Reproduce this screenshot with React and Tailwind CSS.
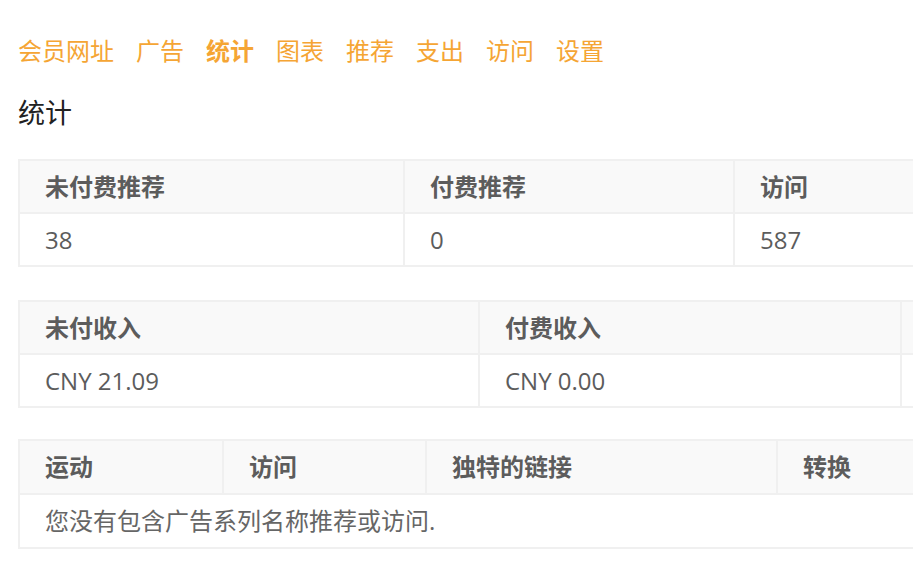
import React from 'react';

const navItems = ['会员网址', '广告', '统计', '图表', '推荐', '支出', '访问', '设置'];

const font = { fontFamily: '"Open Sans", "Noto Sans CJK SC", sans-serif' };

const StatTable = ({ cols, rows, full, tall }) => {
  const h = tall ? 'h-[54px]' : 'h-[53px]';
  return (
    <div className="overflow-hidden">
      <table className="border-collapse table-fixed" style={{ width: cols.reduce((s, c) => s + c.w, 0) }}>
        <colgroup>
          {cols.map((c, i) => (
            <col key={i} style={{ width: c.w }} />
          ))}
        </colgroup>
        <thead>
          <tr className="bg-[#f9f9f9]">
            {cols.map((c, i) => (
              <th key={i} className={h + ' border-2 border-[#f0f0f0] px-[25px] text-left font-bold text-[#5c5c5c] text-[24px]'}>
                {c.label}
              </th>
            ))}
          </tr>
        </thead>
        <tbody>
          {full ? (
            <tr>
              <td colSpan={cols.length} className={h + ' border-2 border-[#f0f0f0] px-[25px] text-[#666] text-[24px]'}>
                {full}
              </td>
            </tr>
          ) : (
            rows.map((r, ri) => (
              <tr key={ri}>
                {r.map((v, i) => (
                  <td key={i} className={h + ' border-2 border-[#f0f0f0] px-[25px] text-[#5c5c5c] text-[24px]'}>
                    {v}
                  </td>
                ))}
              </tr>
            ))
          )}
        </tbody>
      </table>
    </div>
  );
};

const App = () => {
  return (
    <div className="w-[913px] h-[570px] overflow-hidden bg-white pl-[18px] pt-[33px]" style={font}>
      <nav className="flex gap-[22px] text-[24px] leading-[36px] text-[#f5a534]">
        {navItems.map((item) => (
          <a key={item} href="#" className={item === '统计' ? 'font-bold' : ''}>
            {item}
          </a>
        ))}
      </nav>

      <h2 className="mt-[24px] text-[27px] leading-[40px] text-[#222]">统计</h2>

      <div className="mt-[26px]">
        <StatTable
          cols={[
            { label: '未付费推荐', w: 385 },
            { label: '付费推荐', w: 330 },
            { label: '访问', w: 260 },
          ]}
          rows={[['38', '0', '587']]}
        />
      </div>

      <div className="mt-[33px]">
        <StatTable
          cols={[
            { label: '未付收入', w: 460 },
            { label: '付费收入', w: 422 },
            { label: '', w: 200 },
          ]}
          rows={[['CNY 21.09', 'CNY 0.00', '']]}
        />
      </div>

      <div className="mt-[31px]">
        <StatTable
          tall
          cols={[
            { label: '运动', w: 204 },
            { label: '访问', w: 203 },
            { label: '独特的链接', w: 351 },
            { label: '转换', w: 200 },
          ]}
          full="您没有包含广告系列名称推荐或访问."
        />
      </div>
    </div>
  );
};

export default App;
